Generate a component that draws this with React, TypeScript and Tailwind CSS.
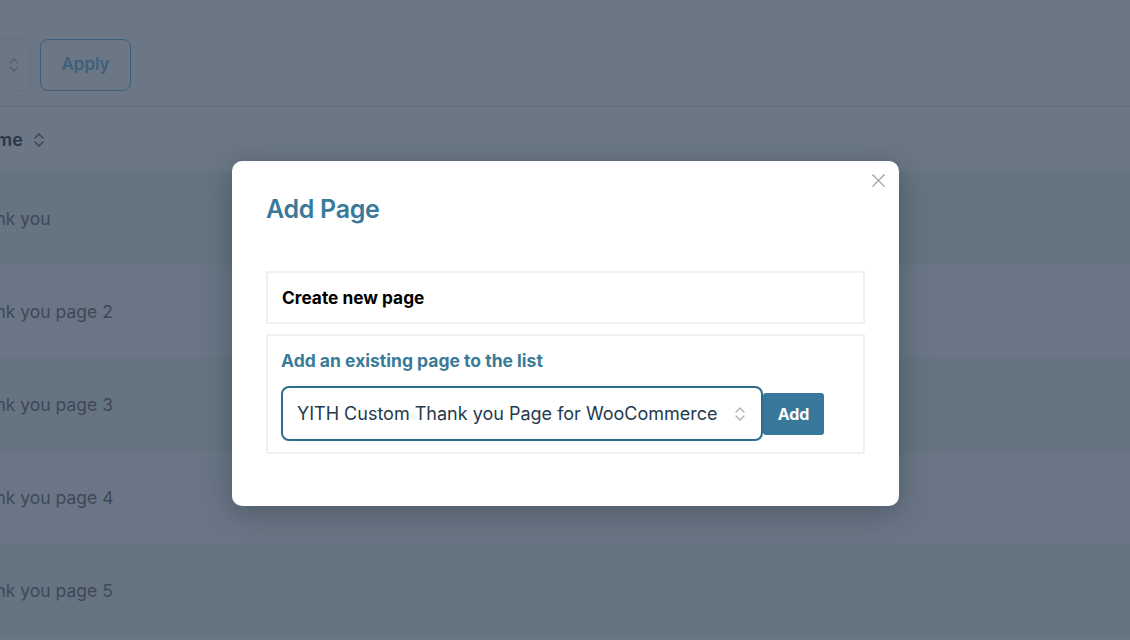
import { X } from 'lucide-react'

const rows = ['Thank you', 'Thank you page 2', 'Thank you page 3', 'Thank you page 4', 'Thank you page 5']

function UpDown({ className }: { className?: string }) {
  return (
    <svg width="12" height="18" viewBox="0 0 12 18" fill="none" className={className} aria-hidden="true">
      <path d="M2 7l4-4 4 4" stroke="currentColor" strokeWidth="1.4" strokeLinecap="round" strokeLinejoin="round" />
      <path d="M2 11l4 4 4-4" stroke="currentColor" strokeWidth="1.4" strokeLinecap="round" strokeLinejoin="round" />
    </svg>
  )
}

export default function App() {
  return (
    <div className="relative h-[640px] w-[1130px] overflow-hidden bg-[#6b7785] font-['Inter',sans-serif]">
      {/* dimmed page behind the dialog */}
      <div className="flex h-[107px] items-end gap-[9px] border-b border-[#626e7c] pb-[15px]">
        <div className="ml-[-40px] flex h-[52px] w-[71px] items-center justify-end rounded-[8px] border border-[#66727f] pr-[10px] text-[#55616f]">
          <UpDown />
        </div>
        <div className="flex h-[52px] w-[91px] items-center justify-center rounded-[8px] border border-[#3e5d78] text-[17px] font-semibold text-[#3f5f7b]">
          Apply
        </div>
      </div>
      <div className="ml-[-28px] flex h-[65px] items-center gap-[10px] text-[18px] font-semibold text-[#2b3644]">
        <span>Name</span>
        <UpDown className="text-[#3a4553]" />
      </div>
      {rows.map((r, i) => (
        <div
          key={r}
          className={'flex h-[93px] items-center pt-[2px] ' + (i % 2 === 0 ? 'bg-[#667381]' : 'bg-[#6a7685]')}
        >
          <span className="ml-[-36px] text-[17.5px] text-[#3e4957]">{r}</span>
        </div>
      ))}

      {/* dialog */}
      <div className="absolute left-[232px] top-[161px] h-[345px] w-[667px] rounded-[10px] bg-white shadow-[0_6px_30px_rgba(40,50,65,0.45)]">
        <button className="absolute right-[9px] top-[8px] text-[#a3a3a3]">
          <X size={23} strokeWidth={1.2} />
        </button>
        <div className="px-[34px] pt-[33px]">
          <h2 className="text-[25px] font-semibold leading-[30px] tracking-[-0.3px] text-[#3a7999]">Add Page</h2>
          <div className="mt-[47px] flex h-[53px] items-center border-2 border-[#f1f1f1] px-[14px] pt-[1px] text-[17.3px] font-bold text-black">
            Create new page
          </div>
          <div className="mt-[10px] h-[120px] border-2 border-[#f1f1f1] px-[13px] pt-[14px]">
            <div className="text-[17.5px] font-bold leading-[22px] text-[#3a7b99]">Add an existing page to the list</div>
            <div className="mt-[14px] flex items-center">
              <div className="flex h-[55px] w-[482px] items-center justify-between rounded-[8px] border-2 border-[#2f6d8c] pl-[14px] pr-[15px]">
                <span className="text-[18px] text-[#1f3a4e]">YITH Custom Thank you Page for WooCommerce</span>
                <UpDown className="text-[#b0b0b0]" />
              </div>
              <button className="flex h-[42px] w-[61px] items-center justify-center rounded-[3px] bg-[#38789b] text-[16px] font-bold text-white">
                Add
              </button>
            </div>
          </div>
        </div>
      </div>
    </div>
  )
}
